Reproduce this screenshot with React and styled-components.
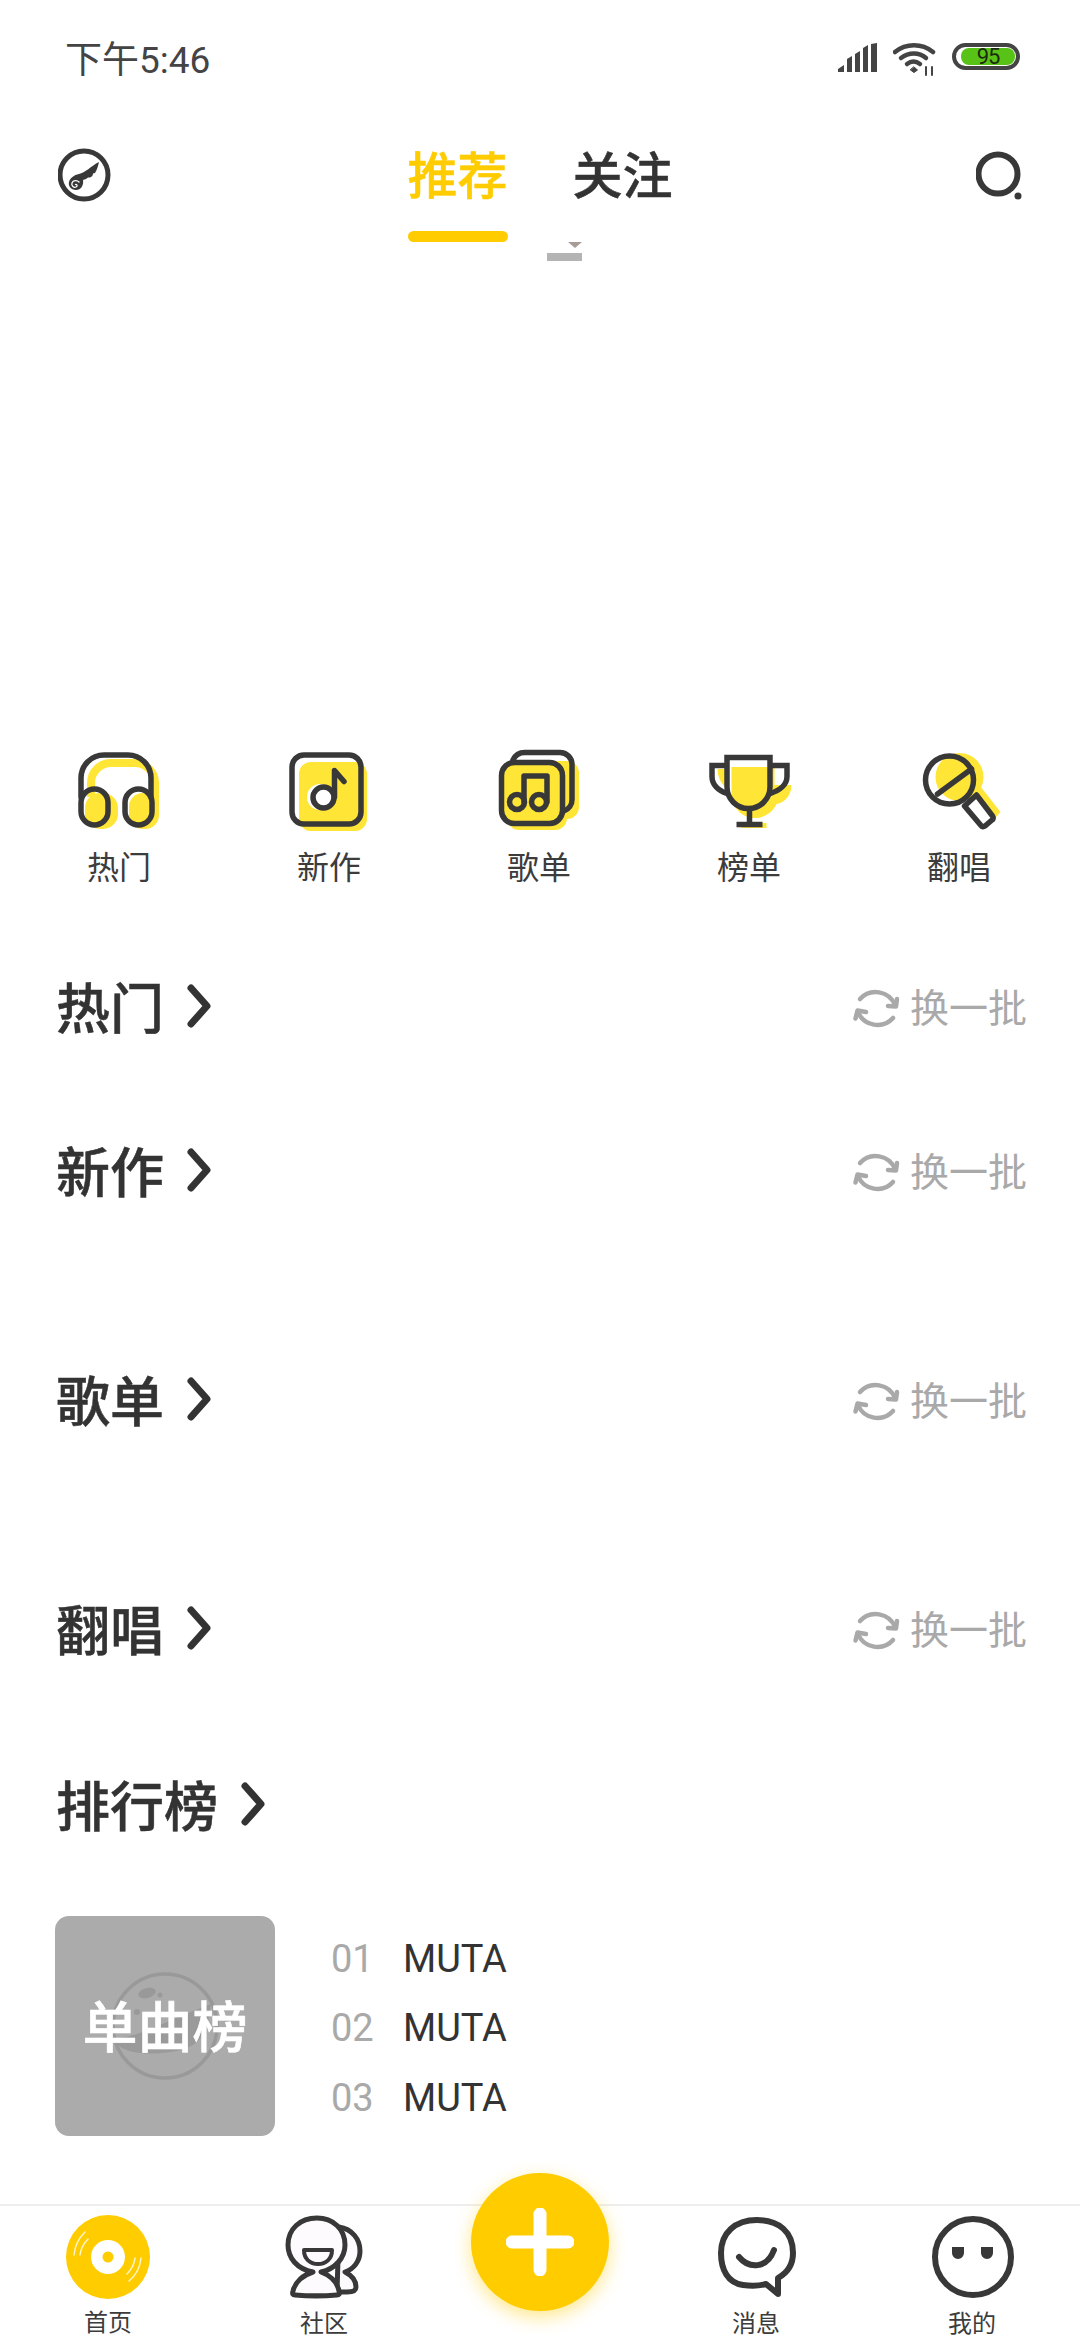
import React from "react";
import styled, { createGlobalStyle } from "styled-components";

const Y = "#ffcc00";
const SOFT = "#ffe535";
const INK = "#383838";
const GREY = "#a9a9a9";
const CJK = `Roboto, "Noto Sans CJK SC", sans-serif`;

const Global = createGlobalStyle`
  html, body { margin: 0; padding: 0; background: #fff; }
  * { box-sizing: border-box; }
  body { font-family: ${CJK}; color: ${INK}; }
`;

const Page = styled.div`
  position: relative;
  width: 1080px;
  height: 2340px;
  overflow: hidden;
  display: flex;
  flex-direction: column;
  background: #fff;
`;

const StatusBar = styled.div`
  height: 120px;
  flex: none;
  display: flex;
  align-items: center;
  justify-content: space-between;
  padding: 0 60px 0 65px;
`;
const Clock = styled.span`
  font-size: 37px;
  color: #444;
  line-height: 1;
`;
const StatusIcons = styled.div`
  display: flex;
  align-items: flex-start;
  gap: 16px;
  height: 30px;
  margin-bottom: 4px;
`;
const Battery = styled.div`
  width: 68px;
  height: 27px;
  border: 4px solid #444;
  border-radius: 14px;
  padding: 1px 1px 1px 5px;
  display: flex;
`;
const BatteryLevel = styled.div`
  flex: 1;
  background: #58c216;
  border-radius: 8px;
  display: flex;
  align-items: center;
  justify-content: center;
  font: 400 22px/1 "Roboto", sans-serif;
  color: #1d2a10;
  letter-spacing: -1px;
`;

const NavBar = styled.div`
  height: 122px;
  flex: none;
  display: grid;
  grid-template-columns: 1fr auto 1fr;
  padding: 0 58px;
  align-items: start;
`;
const NavSide = styled.div`
  display: flex;
  justify-content: ${(p) => (p.$end ? "flex-end" : "flex-start")};
  padding-top: ${(p) => (p.$end ? 31 : 28)}px;
  margin-right: ${(p) => (p.$end ? -4 : 0)}px;
`;
const Tabs = styled.div`
  display: flex;
  gap: 65px;
`;
const Tab = styled.div`
  display: flex;
  flex-direction: column;
  align-items: center;
  font-size: 50px;
  font-weight: 500;
  -webkit-text-stroke: 0.5px currentColor;
  line-height: 60px;
  padding-top: 27px;
  color: ${(p) => (p.$on ? Y : "#333")};
`;
const TabBarLine = styled.div`
  width: 100px;
  height: 11px;
  border-radius: 6px;
  margin-top: 24px;
  background: ${(p) => (p.$on ? Y : "transparent")};
`;

const Banner = styled.div`
  height: 503px;
  flex: none;
  padding-left: 547px;
`;
const Marker = styled.div`
  width: 35px;
  display: flex;
  flex-direction: column;
  align-items: flex-end;
  gap: 5px;
`;
const MarkerTip = styled.div`
  width: 0;
  height: 0;
  border-left: 7px solid transparent;
  border-right: 7px solid transparent;
  border-top: 6px solid #a89c98;
  filter: blur(0.5px);
`;
const MarkerBar = styled.div`
  width: 35px;
  height: 8px;
  background: #b4b4b4;
  filter: blur(0.6px);
`;

const Cats = styled.div`
  flex: none;
  height: 233px;
  padding: 0 16px 0 14px;
  display: grid;
  grid-template-columns: repeat(5, 1fr);
`;
const Cat = styled.div`
  display: flex;
  flex-direction: column;
  align-items: center;
`;
const CatLabel = styled.span`
  font-size: 32px;
  line-height: 40px;
  margin-top: 13px;
  color: #3c3c3c;
`;

const Section = styled.section`
  flex: none;
  height: ${(p) => p.$h}px;
  padding: 0 56px;
`;
const Head = styled.div`
  height: 60px;
  display: flex;
  align-items: center;
  justify-content: space-between;
`;
const Title = styled.div`
  display: flex;
  align-items: center;
  gap: 22px;
  padding-top: 6px;
  font-size: 54px;
  font-weight: 500;
  -webkit-text-stroke: 0.5px currentColor;
  line-height: 60px;
  color: #333;
`;
const ChevronMark = styled.svg`
  margin-bottom: 10px;
`;
const Refresh = styled.div`
  display: flex;
  align-items: center;
  gap: 8px;
  font-size: 39px;
  line-height: 44px;
  color: ${GREY};
  padding-top: 1px;
  margin-right: -3px;
`;

const Chart = styled.div`
  display: flex;
  align-items: center;
  gap: 56px;
  margin: 80px 0 0 -1px;
`;
const Cover = styled.div`
  position: relative;
  width: 220px;
  height: 220px;
  border-radius: 14px;
  background: #ababab;
  display: flex;
  align-items: center;
  justify-content: center;
  padding-top: 4px;
`;
const CoverArt = styled.svg`
  position: absolute;
  left: 50px;
  top: 50px;
`;
const CoverText = styled.span`
  position: relative;
  font-size: 55px;
  font-weight: 500;
  -webkit-text-stroke: 0.6px #fff;
  color: #fff;
  line-height: 1;
`;
const ChartList = styled.div`
  display: flex;
  flex-direction: column;
  padding-top: 6px;
`;
const ChartRow = styled.div`
  display: flex;
  font-size: 38px;
  line-height: 69.5px;
  font-family: Roboto, sans-serif;
`;
const Rank = styled.span`
  width: 72px;
  color: ${GREY};
  font-weight: 400;
`;
const Song = styled.span`
  color: #333;
`;

const BottomBar = styled.div`
  position: absolute;
  left: 0;
  right: 0;
  bottom: 0;
  height: 136px;
  border-top: 2px solid #eeeeee;
  display: grid;
  grid-template-columns: repeat(5, 1fr);
  background: #fff;
`;
const BottomItem = styled.div`
  display: flex;
  flex-direction: column;
  align-items: center;
  padding-top: 9px;
`;
const BottomLabel = styled.span`
  font-size: 24px;
  line-height: 28px;
  margin-top: 9px;
  color: #3c3c3c;
`;
const Fab = styled.div`
  position: absolute;
  left: 471px;
  top: -33px;
  width: 138px;
  height: 138px;
  border-radius: 50%;
  background: ${Y};
  display: flex;
  align-items: center;
  justify-content: center;
  box-shadow: 0 6px 18px rgba(255, 204, 0, 0.45);
`;
const VinylMark = styled.svg`
  margin-top: -1px;
`;

const S = { fill: "none", stroke: INK, strokeWidth: 5.5, strokeLinecap: "round", strokeLinejoin: "round" };

const CatSvg = ({ children }) => (
  <svg width="100" height="90" viewBox="0 0 100 90">
    {children}
  </svg>
);

const Headphones = () => (
  <CatSvg>
    <path d="M22 52V38a20 20 0 0 1 20-20h24a20 20 0 0 1 20 20v24" fill="none" stroke={SOFT} strokeWidth="8" />
    <rect x="16" y="48" width="33" height="36" rx="15" fill={SOFT} />
    <rect x="60" y="48" width="30" height="36" rx="14" fill={SOFT} />
    <path d="M12 52V33a23 23 0 0 1 23-23h24a23 23 0 0 1 23 23v19" {...S} />
    <rect x="12" y="44" width="27" height="36" rx="13.5" {...S} />
    <rect x="56" y="44" width="27" height="36" rx="13.5" {...S} />
  </CatSvg>
);
const NewWork = () => (
  <CatSvg>
    <rect x="20" y="17" width="68" height="69" rx="12" fill={SOFT} />
    <circle cx="41" cy="52" r="13" fill="#fff" />
    <rect x="13" y="10" width="69" height="69" rx="12" {...S} />
    <circle cx="44.5" cy="52.5" r="10.5" {...S} />
    <path d="M55.5 52V25.5L65 36.5" {...S} />
  </CatSvg>
);
const Playlist = () => (
  <CatSvg>
    <rect x="32" y="16" width="58" height="58" rx="12" fill={SOFT} />
    <rect x="18" y="24" width="60" height="61" rx="12" fill={SOFT} />
    <rect x="12" y="17" width="62" height="62" rx="13" fill={SOFT} />
    <path d="M24 15a13 13 0 0 1 12-7.5h35a12 12 0 0 1 12 12v35a12 12 0 0 1-8 11.5" fill="none" stroke={INK} strokeWidth="5.5" strokeLinecap="round" />
    <rect x="12.5" y="17.5" width="61" height="61" rx="13" {...S} />
    <circle cx="28" cy="57" r="7.5" {...S} />
    <circle cx="50" cy="57" r="7.5" {...S} />
    <path d="M35 57V31h23v26" {...S} />
  </CatSvg>
);
const Trophy = () => (
  <CatSvg>
    <g transform="translate(1.5 0)">
      <path d="M31 22H74V40H91C91 50 84 58 76 59C72 68 62 74 52 73C42 72 35 65 31 55Z" fill={SOFT} />
      <path d="M17 24h10v20c-6-4-10-12-10-20z" fill={SOFT} />
      <rect x="41" y="78" width="25" height="5" fill={SOFT} />
      <path d="M26.5 12.5h43V42a21.5 21.5 0 0 1-43 0z" fill="none" stroke={INK} strokeWidth="5.5" strokeLinejoin="miter" />
      <path d="M26.5 20.5h-15v11c0 8 6 14 15 17M69.5 20.5h17v11c0 8-7 14-17 17" fill="none" stroke={INK} strokeWidth="5.5" />
      <path d="M49 66v12M36 79.5h26" fill="none" stroke={INK} strokeWidth="5.5" />
    </g>
  </CatSvg>
);
const Mic = () => (
  <CatSvg>
    <g transform="translate(1.5 0)">
      <circle cx="49" cy="32" r="24" fill={SOFT} />
      <path d="M55 52l13-13 22 28-14 16z" fill={SOFT} />
      <path d="M54 61l12-11 16 21c1 1.5 1 3-.5 4l-7 6c-1.5 1-3 1-4-.5z" fill="#fff" stroke={INK} strokeWidth="5.5" strokeLinejoin="round" />
      <circle cx="39" cy="35" r="24" {...S} />
      <path d="M27 49L61 24" {...S} />
    </g>
  </CatSvg>
);

const Chevron = () => (
  <ChevronMark width="26" height="44" viewBox="0 0 26 44">
    <path d="M5 4l16 18L5 40" fill="none" stroke="#333" strokeWidth="7" strokeLinecap="round" strokeLinejoin="round" />
  </ChevronMark>
);

const RefreshIcon = () => (
  <svg width="50" height="50" viewBox="7 8 50 50">
    <g fill="none" stroke={GREY} strokeWidth="4.5" strokeLinecap="round" strokeLinejoin="round">
      <path d="M15 23A21 21 0 0 1 50 29" />
      <path d="M43 30l8 .5 1-7.5" />
      <path d="M48 42A21 21 0 0 1 13 36" />
      <path d="M21 36l-8.5-1.5-2 8" />
    </g>
  </svg>
);

const Signal = () => (
  <svg width="39" height="29" viewBox="0 0 39 29" fill="#444">
    <path d="M0 29v-3l6-4v7zM9 29V16l5-3v16zM17 29V11l5-3v21zM25 29V5l5-3v27zM33 29V1l6-1v29z" />
  </svg>
);
const Wifi = () => (
  <svg width="43" height="33" viewBox="0 0 43 33" fill="none" stroke="#444" strokeWidth="4.5" strokeLinecap="round">
    <path d="M2 9c11-9 27-9 38 0" />
    <path d="M8 15c8-6 18-6 25 0" />
    <path d="M14 21c4-3 9-3 13 0" />
    <path d="M21 24l3.5 3-3.5 2.5-3.5-2.5z" fill="#444" strokeWidth="1" />
    <path d="M33 24v8M39 24v8" strokeWidth="2" />
  </svg>
);
const Wing = () => (
  <svg width="54" height="54" viewBox="0 0 54 54">
    <circle cx="26" cy="27" r="24" fill="none" stroke={INK} strokeWidth="5" />
    <path d="M41 14c-1 4-2 8-4 11l-2 .5c0 2-1 3-3 4l-2 0c-1 1-3 2-5 2.5c1 5-2 10-7 10-5 0-8-4-7-8 1-4 5-7 10-8C27 25 33 18 41 14z" fill={INK} />
    <path d="M21 34c-2-2-6-2-7 1-1 3 2 5 4 4 2-1 1-3-.5-2.5" fill="none" stroke="#fff" strokeWidth="1.3" strokeLinecap="round" />
  </svg>
);
const Search = () => (
  <svg width="50" height="52" viewBox="0 0 50 52">
    <circle cx="22" cy="23" r="19.5" fill="none" stroke={INK} strokeWidth="6" />
    <circle cx="42" cy="45" r="3.5" fill={INK} />
  </svg>
);

const Vinyl = () => (
  <VinylMark width="86" height="86" viewBox="0 0 86 86">
    <circle cx="43" cy="43" r="42" fill={Y} />
    <circle cx="43" cy="43" r="17" fill="#fff" />
    <circle cx="43" cy="43" r="5.5" fill={Y} />
    <g fill="none" stroke="#fff" strokeOpacity="0.8" strokeWidth="1.5" strokeLinecap="round">
      <path d="M9 41C10 29 15 23 20 18" />
      <path d="M15 41c1-8 4-12 8-16" />
      <path d="M76 44C75 55 70 62 64 67" />
      <path d="M70 44c-1 8-4 12-8 16" />
    </g>
  </VinylMark>
);
const Community = () => (
  <svg width="78" height="86" viewBox="0 0 78 86">
    <g fill="#fdfbfd" stroke={INK} strokeWidth="5" strokeLinejoin="round" strokeLinecap="round">
      <path d="M54 12C67 14 75 24 75 36C75 46 69 54 60 57C66 60 71 65 71 72C71 76 68 77 62 77H52Z" />
      <path d="M28 57C12 54 3 43 3 30C3 14 15 3 32 3C48 3 60 14 60 30C60 43 50 54 36 57C44 60 52 66 54 76C55 79 54 80 52 80C40 81 22 81 10 80C8 80 7 79 8 76C10 67 18 60 28 57Z" />
    </g>
    <path d="M19 35H47C47 44 41 49 33 49C25 49 19 44 19 35Z" fill="none" stroke={INK} strokeWidth="4" strokeLinejoin="round" />
  </svg>
);
const Message = () => (
  <svg width="86" height="86" viewBox="0 0 86 86" fill="none" stroke={INK} strokeWidth="6" strokeLinecap="round" strokeLinejoin="round">
    <path d="M44 5C66 5 80 17 80 38C80 50 74 58 65 63L65 79L53 69C46 71 38 71 30 70C15 68 8 55 8 38C8 18 22 5 44 5Z" />
    <path d="M26 42C36 54 54 54 61 35" />
  </svg>
);
const Me = () => (
  <svg width="84" height="86" viewBox="0 0 84 86">
    <circle cx="43" cy="42" r="38" fill="none" stroke={INK} strokeWidth="6" />
    <path d="M22 32h12v6a6 6 0 0 1-12 0zM51 32h12v6a6 6 0 0 1-12 0z" fill={INK} />
  </svg>
);

const cats = [
  ["热门", Headphones],
  ["新作", NewWork],
  ["歌单", Playlist],
  ["榜单", Trophy],
  ["翻唱", Mic],
];
const sections = [
  ["热门", 164],
  ["新作", 229],
  ["歌单", 229],
  ["翻唱", 176],
];

export default function App() {
  return (
    <Page>
      <Global />
      <StatusBar>
        <Clock>下午5:46</Clock>
        <StatusIcons>
          <Signal />
          <Wifi />
          <Battery>
            <BatteryLevel>95</BatteryLevel>
          </Battery>
        </StatusIcons>
      </StatusBar>
      <NavBar>
        <NavSide>
          <Wing />
        </NavSide>
        <Tabs>
          <Tab $on>
            推荐
            <TabBarLine $on />
          </Tab>
          <Tab>
            关注
            <TabBarLine />
          </Tab>
        </Tabs>
        <NavSide $end>
          <Search />
        </NavSide>
      </NavBar>
      <Banner>
        <Marker>
          <MarkerTip />
          <MarkerBar />
        </Marker>
      </Banner>
      <Cats>
        {cats.map(([label, Icon]) => (
          <Cat key={label}>
            <Icon />
            <CatLabel>{label}</CatLabel>
          </Cat>
        ))}
      </Cats>
      {sections.map(([label, h]) => (
        <Section key={label} $h={h}>
          <Head>
            <Title>
              {label}
              <Chevron />
            </Title>
            <Refresh>
              <RefreshIcon />
              换一批
            </Refresh>
          </Head>
        </Section>
      ))}
      <Section $h={360}>
        <Head>
          <Title>
            排行榜
            <Chevron />
          </Title>
        </Head>
        <Chart>
          <Cover>
            <CoverArt width="120" height="120" viewBox="0 0 120 120">
              <circle cx="60" cy="60" r="52" fill="none" stroke="#999" strokeWidth="3.5" />
              <ellipse cx="42" cy="27" rx="9" ry="5" fill="#999" transform="rotate(-15 42 27)" />
              <circle cx="55" cy="29" r="2.5" fill="#999" />
              <circle cx="32" cy="46" r="3" fill="#999" />
              <path d="M8 72c20 2 50-16 98-34-4 30-10 40-30 46-24 6-62 6-68-12z" fill="#9a9a9a" />
            </CoverArt>
            <CoverText>单曲榜</CoverText>
          </Cover>
          <ChartList>
            <ChartRow>
              <Rank>01</Rank>
              <Song>MUTA</Song>
            </ChartRow>
            <ChartRow>
              <Rank>02</Rank>
              <Song>MUTA</Song>
            </ChartRow>
            <ChartRow>
              <Rank>03</Rank>
              <Song>MUTA</Song>
            </ChartRow>
          </ChartList>
        </Chart>
      </Section>
      <BottomBar>
        <BottomItem>
          <Vinyl />
          <BottomLabel>首页</BottomLabel>
        </BottomItem>
        <BottomItem>
          <Community />
          <BottomLabel>社区</BottomLabel>
        </BottomItem>
        <BottomItem />
        <BottomItem>
          <Message />
          <BottomLabel>消息</BottomLabel>
        </BottomItem>
        <BottomItem>
          <Me />
          <BottomLabel>我的</BottomLabel>
        </BottomItem>
        <Fab>
          <svg width="68" height="68" viewBox="0 0 68 68">
            <path d="M34 6v56M6 34h56" stroke="#fff" strokeWidth="13" strokeLinecap="round" />
          </svg>
        </Fab>
      </BottomBar>
    </Page>
  );
}
